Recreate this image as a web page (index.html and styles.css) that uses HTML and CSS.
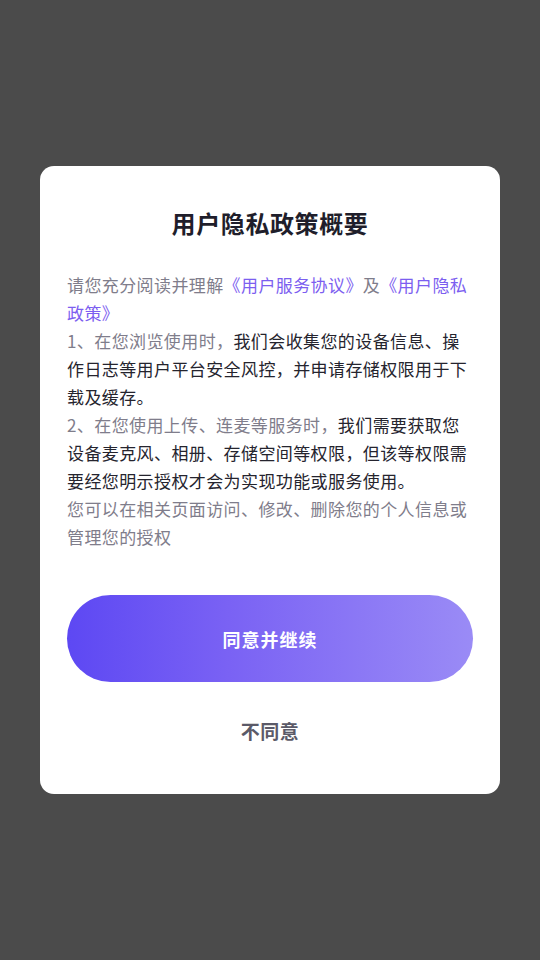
FILE: index.html
```html
<!DOCTYPE html>
<html lang="zh-CN">
<head>
<meta charset="utf-8">
<title>用户隐私政策概要</title>
<link rel="stylesheet" href="styles.css">
</head>
<body>
<div class="overlay">
  <div class="dialog">
    <h1 class="title">用户隐私政策概要</h1>
    <div class="content">
      <p class="para muted">请您充分阅读并理解<span class="link">《用户服务协议》</span>及<span class="link">《用户隐私政策》</span></p>
      <p class="para"><span class="muted">1、在您浏览使用时，</span>我们会收集您的设备信息、操作日志等用户平台安全风控，并申请存储权限用于下载及缓存。</p>
      <p class="para"><span class="muted">2、在您使用上传、连麦等服务时，</span>我们需要获取您设备麦克风、相册、存储空间等权限，但该等权限需要经您明示授权才会为实现功能或服务使用。</p>
      <p class="para muted">您可以在相关页面访问、修改、删除您的个人信息或管理您的授权</p>
    </div>
    <button class="btn-agree" type="button">同意并继续</button>
    <button class="btn-decline" type="button">不同意</button>
  </div>
</div>
</body>
</html>
```
FILE: styles.css
```css
* { box-sizing: border-box; }
html, body {
  margin: 0;
  padding: 0;
  width: 540px;
  height: 960px;
  background: #4b4b4b;
  font-family: "Noto Sans CJK SC", "Noto Sans", sans-serif;
}
.overlay {
  width: 540px;
  height: 960px;
  display: flex;
  justify-content: center;
  padding-top: 166px;
}
.dialog {
  width: 460px;
  height: 628px;
  background: #ffffff;
  border-radius: 14px;
  padding: 40px 27px 0 27px;
  display: flex;
  flex-direction: column;
}
.title {
  margin: 0;
  font-size: 24px;
  line-height: 34px;
  font-weight: 700;
  color: #1f1e2b;
  text-align: center;
  letter-spacing: 0.6px;
}
.content {
  margin-top: 31px;
}
.para {
  margin: 0;
  font-size: 17px;
  line-height: 28px;
  letter-spacing: 0.4px;
  color: #25242e;
}
.muted { color: #7f7d8b; }
.link { color: #7c5ef0; }
.btn-agree {
  margin-top: 44px;
  height: 87px;
  width: 100%;
  border: none;
  border-radius: 44px;
  background: linear-gradient(90deg, #5d48f3 0%, #7a62f4 40%, #9a8bf6 100%);
  color: #ffffff;
  font-family: inherit;
  font-size: 18px;
  font-weight: 700;
  letter-spacing: 1px;
  padding: 0;
}
.btn-decline {
  margin-top: 35px;
  height: 28px;
  line-height: 28px;
  border: none;
  background: none;
  padding: 0;
  color: #5b5a68;
  font-family: inherit;
  font-size: 19px;
  font-weight: 700;
  letter-spacing: 0.5px;
}
```
